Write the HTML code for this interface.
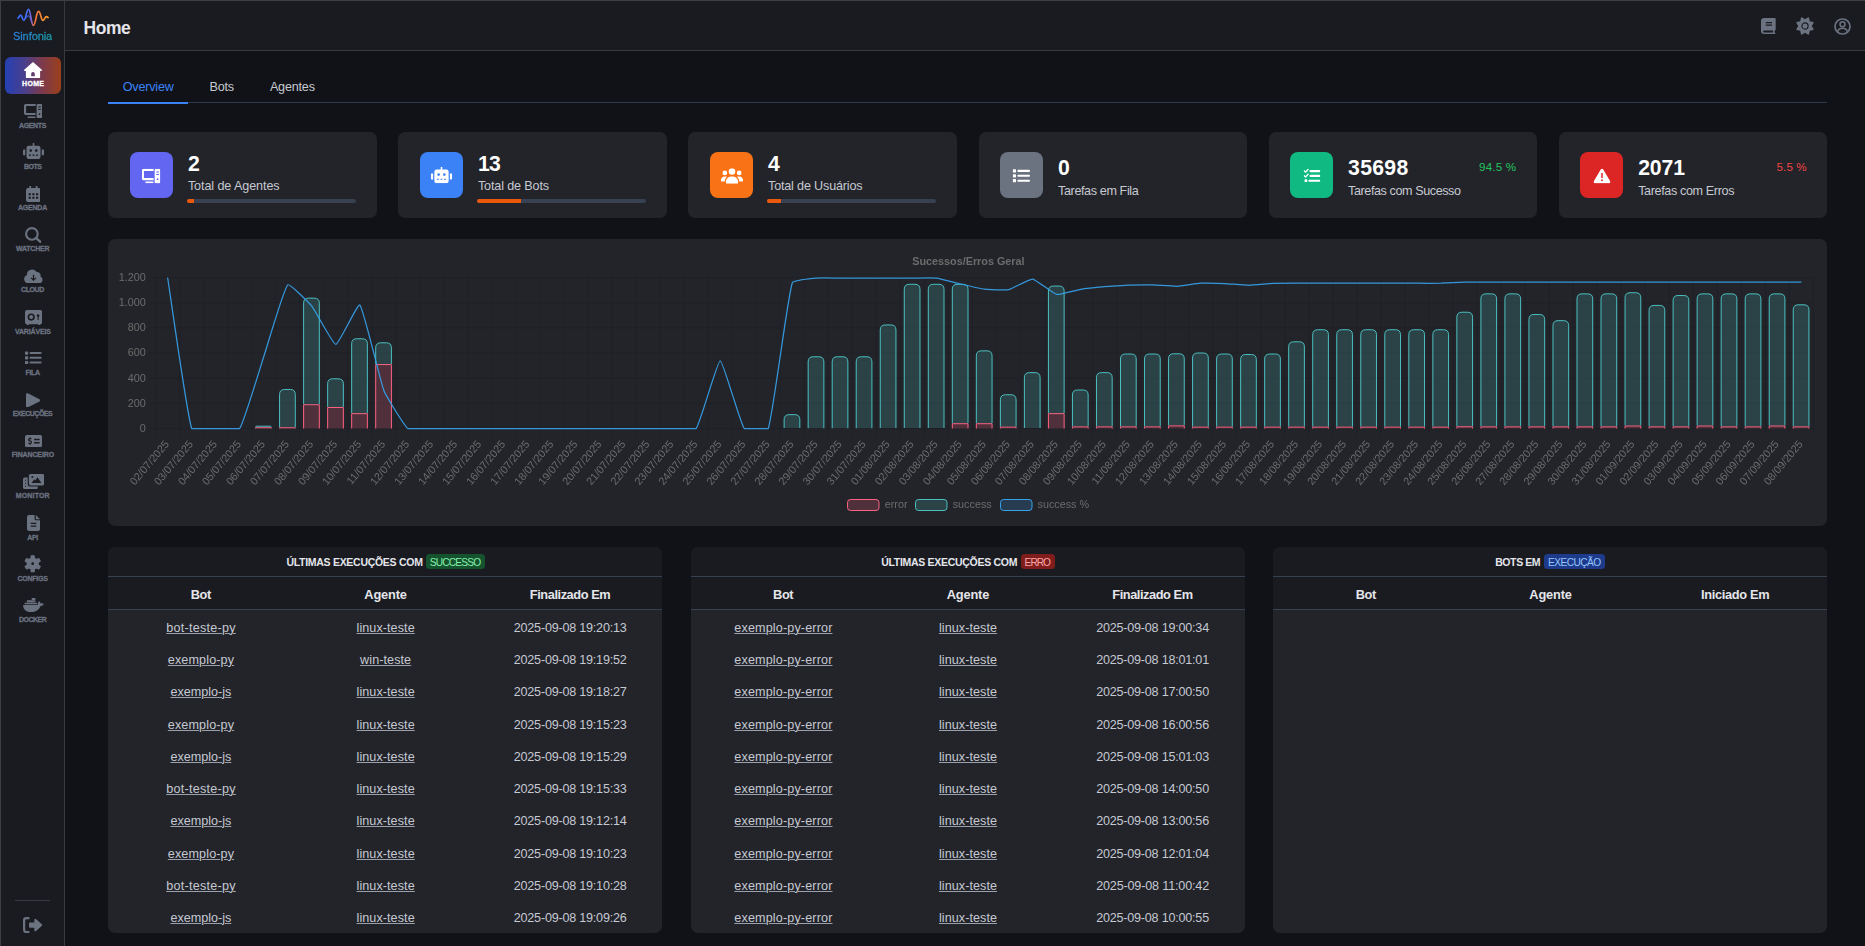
<!DOCTYPE html>
<html lang="pt-BR"><head><meta charset="utf-8"><title>Sinfonia - Home</title>
<style>
*{box-sizing:border-box;margin:0;padding:0}
html,body{width:1865px;height:946px;overflow:hidden;background:#111217;font-family:'Liberation Sans', sans-serif;}
body{position:relative}
.abs,.t,.card,.ibox,.prog,.thead,.badge,.pill{position:absolute}
.t{white-space:pre;font-weight:400;display:block;text-decoration:none}
.lnk{text-decoration:underline;text-decoration-thickness:1px;text-underline-offset:1px;text-decoration-color:#9aa1ad}
nav.side{position:absolute;left:0;top:0;width:65px;height:946px;background:#1a1b20;border-right:1px solid #38393f}
header.top{position:absolute;left:65px;top:0;width:1800px;height:51px;background:#1a1b20;border-bottom:1px solid #38393f}
nav.side *, header.top *, .card *{}
.frame-t{position:absolute;left:0;top:0;width:1865px;height:1px;background:#3d3d44}
.frame-l{position:absolute;left:0;top:0;width:1px;height:946px;background:#3d3d44}
.pill{left:5px;top:57px;width:56px;height:37px;border-radius:6px;background:linear-gradient(90deg,#2440b4 0%,#4a3f8c 35%,#7a3a4e 65%,#9c3f1c 100%)}
.card{background:#23242a;border-radius:7.2px}
.ibox{width:43px;height:46px;border-radius:8px}
.prog{width:169px;height:4px;border-radius:2px;background:#374151;overflow:hidden}
.prog i{display:block;height:4px;background:#ea580c}
.thead{background:#1a1b20;border-radius:8px 8px 0 0}
.badge{height:15px;border-radius:3.5px}
svg.chart{position:absolute;left:0;top:0;will-change:transform}
</style></head>
<body>
<nav class="side">
<svg class="abs" style="left:16px;top:6px" width="34" height="22" viewBox="16 6 34 22" fill="none">
<defs><linearGradient id="lg" x1="18" y1="0" x2="48" y2="0" gradientUnits="userSpaceOnUse"><stop offset="0" stop-color="#3a6cff"/><stop offset=".36" stop-color="#4a6cf5"/><stop offset=".46" stop-color="#8a62c4"/><stop offset=".52" stop-color="#f07040"/><stop offset="1" stop-color="#ff9a2a"/></linearGradient></defs>
<path d="M18 18.2C19 17 20 15 20.800 15.200 22 15.500 22.500 20.500 23.800 20.500 25.800 20.500 26.500 9.300 28.500 9.300 30.800 9.300 31 25.400 33.300 25.400 35.800 25.400 36.200 11.400 38.500 11.400 40.500 11.400 41.200 20.500 42.900 20.500 44.400 20.500 45 16.600 46.300 16.600 47 16.600 47.500 17.200 48.100 17.600" stroke="url(#lg)" stroke-width="1.700" stroke-linecap="round"/>
<path d="M25.500 18.500C26.500 16.500 27.300 15.800 28.300 15.800 30 15.800 30.800 20 32 22.500" stroke="url(#lg)" stroke-width="1.300" stroke-linecap="round" opacity=".75"/>
</svg>
<span class="t logo" style="left:13.00px;top:29.00px;font-size:11px;line-height:14px;color:#2385c8;letter-spacing:-0.081px;background:linear-gradient(90deg,#2a7fe0,#1a9ea8);-webkit-background-clip:text;background-clip:text;color:transparent;-webkit-text-stroke:.3px transparent;">Sinfonia</span>
<a class="pill"></a>
<svg class="abs" style="left:24.00px;top:61.80px;color:#fff" width="18" height="16.2" viewBox="0 0 18 16.2" preserveAspectRatio="none" fill="currentColor"><path fill-rule="evenodd" d="M9 0 17.800 7.700a.7.700 0 0 1-.5 1.200H16.100V15.200a1 1 0 0 1-1 1H2.900a1 1 0 0 1-1-1V8.900H.7A.7.700 0 0 1 .2 7.700ZM7.200 14.300H10.800V11.800a1.800 1.800 0 0 0-3.600 0Z"/></svg>
<span class="t" style="left:22.00px;top:79.00px;font-size:7px;line-height:9px;color:#fff;font-weight:700;letter-spacing:0.333px;-webkit-text-stroke:.3px;">HOME</span>
<svg class="abs" style="left:23.80px;top:104.00px;color:#6b7280" width="18.4" height="14.4" viewBox="0 0 18.4 14.4" preserveAspectRatio="none" fill="currentColor"><path d="M1.8 0H11.6V2.1H2.1V9H11.6V11.1H1.8A1.8 1.8 0 0 1 0 9.3V1.8A1.8 1.8 0 0 1 1.8 0ZM3.6 12.4H11.4V14.2H3.6Z"/><path fill-rule="evenodd" d="M13.9 0H17.1A1.3 1.3 0 0 1 18.4 1.3V13.1A1.3 1.3 0 0 1 17.1 14.4H13.9A1.3 1.3 0 0 1 12.6 13.1V1.3A1.3 1.3 0 0 1 13.9 0ZM14.2 2.6V3.6H16.8V2.6ZM14.2 5.1V6.1H16.8V5.1ZM15.5 9.2A.9.9 0 1 0 15.5 11 .9.9 0 0 0 15.5 9.2Z"/></svg>
<span class="t" style="left:19.00px;top:121.00px;font-size:7px;line-height:9px;color:#6b7280;font-weight:700;letter-spacing:-0.374px;-webkit-text-stroke:.3px;">AGENTS</span>
<svg class="abs" style="left:22.70px;top:143.00px;color:#6b7280" width="21" height="16" viewBox="0 0 21 16" preserveAspectRatio="none" fill="currentColor"><path fill-rule="evenodd" d="M9.7 0H11.3V2.7H15.3A2.2 2.2 0 0 1 17.5 4.9V13.8A2.2 2.2 0 0 1 15.3 16H5.7A2.2 2.2 0 0 1 3.500 13.8V4.900A2.2 2.2 0 0 1 5.7 2.7H9.7ZM7.700 6.300A1.3 1.3 0 1 0 7.700 8.900 1.3 1.3 0 0 0 7.700 6.300ZM13.3 6.300A1.3 1.3 0 1 0 13.3 8.900 1.3 1.3 0 0 0 13.3 6.300ZM6 11.6V12.7H8V11.6ZM9.500 11.6V12.7H11.5V11.6ZM13 11.6V12.7H15V11.6Z"/><path d="M.8 6.500H2.300V12.3H.8A.8.8 0 0 1 0 11.5V7.300A.8.800 0 0 1 .8 6.500ZM18.700 6.500H20.2A.8.800 0 0 1 21 7.300V11.500A.8.800 0 0 1 20.200 12.300H18.700Z"/></svg>
<span class="t" style="left:24.00px;top:162.00px;font-size:7px;line-height:9px;color:#6b7280;font-weight:700;letter-spacing:-0.484px;-webkit-text-stroke:.3px;">BOTS</span>
<svg class="abs" style="left:25.60px;top:185.60px;color:#6b7280" width="14.8" height="16" viewBox="0 0 14.8 16" preserveAspectRatio="none" fill="currentColor"><path fill-rule="evenodd" d="M3.3 0H5.100V2H9.700V0H11.500V2H12.800A2 2 0 0 1 14.800 4V14A2 2 0 0 1 12.800 16H2A2 2 0 0 1 0 14V4A2 2 0 0 1 2 2H3.300ZM2.600 7.200V9.200H4.800V7.200ZM6.300 7.200V9.200H8.500V7.200ZM10 7.200V9.200H12.200V7.200ZM2.600 10.800V12.800H4.800V10.800ZM6.300 10.800V12.800H8.500V10.800ZM10 10.800V12.800H12.200V10.800Z"/></svg>
<span class="t" style="left:18.00px;top:203.00px;font-size:7px;line-height:9px;color:#6b7280;font-weight:700;letter-spacing:-0.229px;-webkit-text-stroke:.3px;">AGENDA</span>
<svg class="abs" style="left:24.50px;top:226.90px;color:#6b7280" width="16.8" height="16.2" viewBox="0 0 16.8 16.2" preserveAspectRatio="none" fill="currentColor"><circle cx="6.900" cy="6.900" r="5.800" fill="none" stroke="currentColor" stroke-width="2.100"/><path d="M11.100 11.100 15.800 15.200" stroke="currentColor" stroke-width="2.300" stroke-linecap="round" fill="none"/></svg>
<span class="t" style="left:15.90px;top:244.00px;font-size:7px;line-height:9px;color:#6b7280;font-weight:700;letter-spacing:-0.196px;-webkit-text-stroke:.3px;">WATCHER</span>
<svg class="abs" style="left:23.50px;top:268.70px;color:#6b7280" width="19" height="14.4" viewBox="0 0 19 14.4" preserveAspectRatio="none" fill="currentColor"><path fill-rule="evenodd" d="M4.300 14.400A4.300 4.300 0 0 1 2.900 6.100 5.300 5.300 0 0 1 12.700 3.100 3.600 3.600 0 0 1 16.500 7.600 3.600 3.600 0 0 1 15.400 14.400ZM8.900 5.700V9.800L7.500 8.400 6.700 9.200 9.500 12 12.300 9.200 11.500 8.400 10.100 9.800V5.700Z"/></svg>
<span class="t" style="left:21.00px;top:285.00px;font-size:7px;line-height:9px;color:#6b7280;font-weight:700;letter-spacing:-0.423px;-webkit-text-stroke:.3px;">CLOUD</span>
<svg class="abs" style="left:24.50px;top:309.70px;color:#6b7280" width="17.2" height="15.2" viewBox="0 0 17.2 15.2" preserveAspectRatio="none" fill="currentColor"><path fill-rule="evenodd" d="M2 0H15.200A2 2 0 0 1 17.200 2V12.200A2 2 0 0 1 15.200 14.200L15.700 15.200H13.700L13.200 14.200H4L3.500 15.200H1.500L2 14.200A2 2 0 0 1 0 12.200V2A2 2 0 0 1 2 0ZM6.200 3.500A3.600 3.600 0 1 0 6.200 10.700 3.600 3.600 0 0 0 6.200 3.500ZM6.200 5.100A2 2 0 1 1 6.200 9.100 2 2 0 0 1 6.200 5.100ZM13.100 4.300A1.300 1.300 0 0 0 12.600 6.800V9.900H13.600V6.800A1.300 1.300 0 0 0 13.100 4.300Z"/></svg>
<span class="t" style="left:14.90px;top:327.00px;font-size:7px;line-height:9px;color:#6b7280;font-weight:700;letter-spacing:-0.140px;-webkit-text-stroke:.3px;">VARIÁVEIS</span>
<svg class="abs" style="left:25.00px;top:351.10px;color:#6b7280" width="16.7" height="13.6" viewBox="0 0 16.7 13.6" preserveAspectRatio="none" fill="currentColor"><path d="M.6.500H2.600A.6.600 0 0 1 3.200 1.100V3.100A.6.600 0 0 1 2.600 3.700H.6A.6.600 0 0 1 0 3.100V1.100A.6.600 0 0 1 .6.500ZM5.500 1.100H15.700A1 1 0 0 1 15.700 3.100H5.500A1 1 0 0 1 5.500 1.100ZM.6 5.200H2.600A.6.600 0 0 1 3.200 5.800V7.800A.6.600 0 0 1 2.600 8.400H.6A.6.600 0 0 1 0 7.800V5.800A.6.600 0 0 1 .6 5.200ZM5.500 5.800H15.700A1 1 0 0 1 15.700 7.800H5.500A1 1 0 0 1 5.500 5.800ZM.6 9.900H2.600A.6.600 0 0 1 3.200 10.500V12.500A.6.600 0 0 1 2.600 13.100H.6A.6.600 0 0 1 0 12.500V10.500A.6.600 0 0 1 .6 9.900ZM5.500 10.500H15.700A1 1 0 0 1 15.700 12.500H5.500A1 1 0 0 1 5.500 10.500Z"/></svg>
<span class="t" style="left:25.60px;top:368.00px;font-size:7px;line-height:9px;color:#6b7280;font-weight:700;letter-spacing:-0.388px;-webkit-text-stroke:.3px;">FILA</span>
<svg class="abs" style="left:26.30px;top:392.80px;color:#6b7280" width="14.3" height="14.6" viewBox="0 0 14.3 14.6" preserveAspectRatio="none" fill="currentColor"><path d="M1.900.3 13.500 6.200A1.200 1.200 0 0 1 13.500 8.400L1.900 14.300A1.300 1.300 0 0 1 0 13.200V1.400A1.300 1.300 0 0 1 1.900.3Z"/></svg>
<span class="t" style="left:12.70px;top:409.00px;font-size:7px;line-height:9px;color:#6b7280;font-weight:700;letter-spacing:-0.496px;-webkit-text-stroke:.3px;">EXECUÇÕES</span>
<svg class="abs" style="left:24.50px;top:434.80px;color:#6b7280" width="17" height="12.2" viewBox="0 0 17 12.2" preserveAspectRatio="none" fill="currentColor"><path fill-rule="evenodd" d="M1.800 0H15.200A1.800 1.800 0 0 1 17 1.800V10.400A1.800 1.800 0 0 1 15.200 12.200H1.800A1.800 1.800 0 0 1 0 10.400V1.800A1.800 1.800 0 0 1 1.800 0ZM9 3.800V5.200H14.600V3.800ZM9 7V8.400H14.600V7ZM4.600 2.200V3.100C3.700 3.300 3.100 3.900 3.100 4.800 3.100 6.800 5.800 6.300 5.800 7.400 5.800 7.800 5.500 8 5 8 4.500 8 4 7.800 3.500 7.500L3.100 8.500C3.500 8.800 4.100 9 4.600 9.100V10H5.500V9.100C6.400 8.900 7 8.300 7 7.300 7 5.300 4.300 5.800 4.300 4.800 4.300 4.400 4.600 4.200 5.100 4.200 5.500 4.200 5.900 4.300 6.300 4.600L6.700 3.600C6.400 3.400 6 3.200 5.500 3.100V2.200Z"/></svg>
<span class="t" style="left:11.70px;top:450.00px;font-size:7px;line-height:9px;color:#6b7280;font-weight:700;letter-spacing:-0.129px;-webkit-text-stroke:.3px;">FINANCEIRO</span>
<svg class="abs" style="left:22.70px;top:473.90px;color:#6b7280" width="21.2" height="15" viewBox="0 0 21.2 15" preserveAspectRatio="none" fill="currentColor"><path fill-rule="evenodd" d="M7.500 0H19.600A1.600 1.600 0 0 1 21.200 1.600V9.800A1.600 1.600 0 0 1 19.600 11.400H7.500A1.600 1.600 0 0 1 5.900 9.800V1.600A1.600 1.600 0 0 1 7.500 0ZM9.300 2A1 1 0 1 0 9.300 4 1 1 0 0 0 9.300 2ZM14.500 3.200 12.300 6.600 11.200 5.300 8.600 9H18.400Z"/><path fill-rule="evenodd" d="M1.600 3.600H4.700V10.200A2.400 2.400 0 0 0 7.100 12.600H14.800V13.400A1.600 1.600 0 0 1 13.200 15H1.600A1.600 1.600 0 0 1 0 13.400V5.200A1.600 1.600 0 0 1 1.600 3.600ZM2 5.700V6.800H3.100V5.700ZM2 8.700V9.800H3.100V8.700ZM2 11.700V12.800H3.100V11.700Z"/></svg>
<span class="t" style="left:15.70px;top:491.00px;font-size:7px;line-height:9px;color:#6b7280;font-weight:700;letter-spacing:0.177px;-webkit-text-stroke:.3px;">MONITOR</span>
<svg class="abs" style="left:26.50px;top:515.00px;color:#6b7280" width="13" height="16" viewBox="0 0 13 16" preserveAspectRatio="none" fill="currentColor"><path fill-rule="evenodd" d="M2 0H7.600V3.800A1.500 1.500 0 0 0 9.100 5.300H13V14A2 2 0 0 1 11 16H2A2 2 0 0 1 0 14V2A2 2 0 0 1 2 0ZM8.800 0 13 4.200H9.300A.5.500 0 0 1 8.800 3.700ZM3.700 7.800V9H9.300V7.800ZM3.700 10.500V11.700H9.300V10.500Z"/></svg>
<span class="t" style="left:27.30px;top:533.00px;font-size:7px;line-height:9px;color:#6b7280;font-weight:700;letter-spacing:-0.336px;-webkit-text-stroke:.3px;">API</span>
<svg class="abs" style="left:24.30px;top:555.20px;color:#6b7280" width="17.4" height="17.4" viewBox="0 0 17.4 17.4" preserveAspectRatio="none" fill="currentColor"><path fill-rule="evenodd" stroke="currentColor" stroke-width="1.2" stroke-linejoin="round" d="M6.97 3.37L7.28 0.83L10.12 0.83L10.43 3.37L12.45 4.54L14.81 3.54L16.23 5.99L14.18 7.54L14.18 9.86L16.23 11.41L14.81 13.86L12.45 12.86L10.43 14.03L10.12 16.57L7.28 16.57L6.97 14.03L4.95 12.86L2.59 13.86L1.17 11.41L3.22 9.86L3.22 7.54L1.17 5.99L2.59 3.54L4.95 4.54ZM6.70 8.70A2.0 2.0 0 1 0 10.70 8.70A2.0 2.0 0 1 0 6.70 8.70Z"/></svg>
<span class="t" style="left:17.40px;top:574.00px;font-size:7px;line-height:9px;color:#6b7280;font-weight:700;letter-spacing:-0.215px;-webkit-text-stroke:.3px;">CONFIGS</span>
<svg class="abs" style="left:22.50px;top:597.90px;color:#6b7280" width="21" height="14.2" viewBox="0 0 21 14.2" preserveAspectRatio="none" fill="currentColor"><path d="M8.700.1H12.400V2H8.700ZM3.900 2.200H12.400V4.300H3.900ZM1.600 4.700H14.300V6.300H1.600Z"/><path d="M.1 6.900H14.600C15.200 5.600 15.200 4.200 15.900 3 17 3.600 17.400 4.500 17.600 5.400 18.800 5 20 5.300 20.900 6 20.200 7.300 19 7.900 17.600 7.900 16 11.900 12.600 14.200 8 14.200 3 14.200 0 11.400.1 6.900Z"/></svg>
<span class="t" style="left:18.90px;top:615.00px;font-size:7px;line-height:9px;color:#6b7280;font-weight:700;letter-spacing:-0.489px;-webkit-text-stroke:.3px;">DOCKER</span>
<div class="abs" style="left:15px;top:900px;width:35px;height:1px;background:#3a3b42"></div>
<svg class="abs" style="left:23.30px;top:917.20px;width:19.3px;height:16.2px;color:#6b7280" width="17.4" height="14.6" viewBox="0 0 17.4 14.6" preserveAspectRatio="none" fill="currentColor"><path d="M3 0H5.800V2H3.200A1.200 1.200 0 0 0 2 3.200V11.400A1.200 1.200 0 0 0 3.200 12.600H5.800V14.600H3A3 3 0 0 1 0 11.600V3A3 3 0 0 1 3 0ZM11.600 1.800 17 6.600A1 1 0 0 1 17 8L11.600 12.800A.9.900 0 0 1 10.200 12.100V9.600H6.300A.9.900 0 0 1 5.400 8.700V5.900A.9.900 0 0 1 6.300 5H10.200V2.500A.9.900 0 0 1 11.600 1.800Z"/></svg>
</nav>
<header class="top">
<h1 class="t" style="left:18.60px;top:17.00px;font-size:17.5px;line-height:22px;color:#e4e5ea;font-weight:700;letter-spacing:-0.508px;">Home</h1>
<svg class="abs" style="left:1696.00px;top:18.00px;width:14.7px;height:16px;color:#6b7280" width="14" height="16" viewBox="0 0 14 16" preserveAspectRatio="none" fill="currentColor"><path fill-rule="evenodd" d="M3 0H13A1 1 0 0 1 14 1V11.500A1 1 0 0 1 13 12.500V14.500A.75.750 0 0 1 13 16H3A3 3 0 0 1 0 13V3A3 3 0 0 1 3 0ZM3 12.500A1 1 0 0 0 3 14.500H11.500V12.500ZM4.500 4V5.200H10.500V4ZM4.500 6.500V7.700H10.500V6.500Z"/></svg>
<svg class="abs" style="left:1731.00px;top:17.00px;color:#6b7280" width="18" height="18" viewBox="0 0 18 18" preserveAspectRatio="none" fill="currentColor"><path d="M9.00 2.20L12.15 0.25L12.96 0.59L13.81 4.19L17.41 5.04L17.75 5.85L15.80 9.00L17.75 12.15L17.41 12.96L13.81 13.81L12.96 17.41L12.15 17.75L9.00 15.80L5.85 17.75L5.04 17.41L4.19 13.81L0.59 12.96L0.25 12.15L2.20 9.00L0.25 5.85L0.59 5.04L4.19 4.19L5.04 0.59L5.85 0.25Z"/><circle cx="9" cy="9" r="3.100" fill="none" stroke="#1a1b20" stroke-width="1.100"/></svg>
<svg class="abs" style="left:1768.70px;top:17.60px;color:#6b7280" width="17" height="17" viewBox="0 0 17 17" preserveAspectRatio="none" fill="currentColor"><circle cx="8.500" cy="8.500" r="7.500" fill="none" stroke="currentColor" stroke-width="1.700"/><circle cx="8.500" cy="6.300" r="2.500" fill="none" stroke="currentColor" stroke-width="1.500"/><path d="M3.600 13.900A5 4.500 0 0 1 13.400 13.900" fill="none" stroke="currentColor" stroke-width="1.500"/></svg>
</header>
<div class="tabs">
<span class="t" style="left:122.70px;top:79.00px;font-size:12.6px;line-height:16px;color:#3b82f6;letter-spacing:-0.183px;">Overview</span>
<span class="t" style="left:209.60px;top:79.00px;font-size:12.6px;line-height:16px;color:#c6c9d1;letter-spacing:-0.268px;">Bots</span>
<span class="t" style="left:269.90px;top:79.00px;font-size:12.6px;line-height:16px;color:#c6c9d1;letter-spacing:-0.186px;">Agentes</span>
<div class="abs" style="left:108px;top:102px;width:1719px;height:1px;background:#2c394b"></div>
<div class="abs" style="left:108px;top:102px;width:80px;height:1.8px;background:#3b82f6"></div>
</div>
<section class="card" style="left:108.00px;top:132.00px;width:269px;height:86px">
<div class="ibox" style="left:22.00px;top:20.00px;background:#6366f1"></div>
<svg class="abs" style="left:34.30px;top:36.50px;color:#fff;transform:scale(1.02)" width="18.4" height="14.4" viewBox="0 0 18.4 14.4" preserveAspectRatio="none" fill="currentColor"><path d="M1.8 0H11.6V2.1H2.1V9H11.6V11.1H1.8A1.8 1.8 0 0 1 0 9.3V1.8A1.8 1.8 0 0 1 1.8 0ZM3.6 12.4H11.4V14.2H3.6Z"/><path fill-rule="evenodd" d="M13.9 0H17.1A1.3 1.3 0 0 1 18.4 1.3V13.1A1.3 1.3 0 0 1 17.1 14.4H13.9A1.3 1.3 0 0 1 12.6 13.1V1.3A1.3 1.3 0 0 1 13.9 0ZM14.2 2.6V3.6H16.8V2.6ZM14.2 5.1V6.1H16.8V5.1ZM15.5 9.2A.9.9 0 1 0 15.5 11 .9.9 0 0 0 15.5 9.2Z"/></svg>
<span class="t" style="left:79.90px;top:19.00px;font-size:21.2px;line-height:25px;color:#fff;font-weight:700;letter-spacing:-1.097px;">2</span>
<span class="t" style="left:79.90px;top:46.00px;font-size:12.6px;line-height:16px;color:#c6c9d1;letter-spacing:-0.095px;">Total de Agentes</span>
<div class="prog" style="left:78.90px;top:67.00px"><i style="width:6.8px"></i></div>
</section>
<section class="card" style="left:398.00px;top:132.00px;width:269px;height:86px">
<div class="ibox" style="left:22.05px;top:20.00px;background:#3b82f6"></div>
<svg class="abs" style="left:33.05px;top:34.80px;color:#fff;transform:scale(1.02)" width="21" height="16" viewBox="0 0 21 16" preserveAspectRatio="none" fill="currentColor"><path fill-rule="evenodd" d="M9.7 0H11.3V2.7H15.3A2.2 2.2 0 0 1 17.5 4.9V13.8A2.2 2.2 0 0 1 15.3 16H5.7A2.2 2.2 0 0 1 3.500 13.8V4.900A2.2 2.2 0 0 1 5.7 2.7H9.7ZM7.700 6.300A1.3 1.3 0 1 0 7.700 8.900 1.3 1.3 0 0 0 7.700 6.300ZM13.3 6.300A1.3 1.3 0 1 0 13.3 8.900 1.3 1.3 0 0 0 13.3 6.300ZM6 11.6V12.7H8V11.6ZM9.500 11.6V12.7H11.5V11.6ZM13 11.6V12.7H15V11.6Z"/><path d="M.8 6.500H2.300V12.3H.8A.8.8 0 0 1 0 11.5V7.300A.8.800 0 0 1 .8 6.500ZM18.700 6.500H20.2A.8.800 0 0 1 21 7.300V11.500A.8.800 0 0 1 20.200 12.300H18.700Z"/></svg>
<span class="t" style="left:79.95px;top:19.00px;font-size:21.2px;line-height:25px;color:#fff;font-weight:700;letter-spacing:-0.778px;">13</span>
<span class="t" style="left:79.95px;top:46.00px;font-size:12.6px;line-height:16px;color:#c6c9d1;letter-spacing:-0.143px;">Total de Bots</span>
<div class="prog" style="left:78.95px;top:67.00px"><i style="width:43.9px"></i></div>
</section>
<section class="card" style="left:688.00px;top:132.00px;width:269px;height:86px">
<div class="ibox" style="left:22.10px;top:20.00px;background:#f97316"></div>
<svg class="abs" style="left:33.60px;top:36.70px;color:#fff;transform:scale(1.12)" width="20" height="14" viewBox="0 0 20 14" preserveAspectRatio="none" fill="currentColor"><circle cx="10" cy="3" r="2.900"/><circle cx="3.600" cy="4.300" r="2.100"/><circle cx="16.400" cy="4.300" r="2.100"/><path d="M5.500 14A.8.800 0 0 1 4.700 13.200 4.600 4.600 0 0 1 9.300 7.500H10.700A4.600 4.600 0 0 1 15.300 13.200.8.800 0 0 1 14.500 14ZM.7 12A.7.700 0 0 1 0 11.300 3.600 3.600 0 0 1 3.600 7.500H4.500A3.600 3.600 0 0 1 5.400 7.600 6 6 0 0 0 3.500 12ZM16.500 12A6 6 0 0 0 14.600 7.600 3.600 3.600 0 0 1 15.500 7.500H16.400A3.600 3.600 0 0 1 20 11.300.7.700 0 0 1 19.300 12Z"/></svg>
<span class="t" style="left:80.00px;top:19.00px;font-size:21.2px;line-height:25px;color:#fff;font-weight:700;letter-spacing:0.103px;">4</span>
<span class="t" style="left:80.00px;top:46.00px;font-size:12.6px;line-height:16px;color:#c6c9d1;letter-spacing:-0.170px;">Total de Usuários</span>
<div class="prog" style="left:79.00px;top:67.00px"><i style="width:13.5px"></i></div>
</section>
<section class="card" style="left:979.00px;top:132.00px;width:268px;height:86px">
<div class="ibox" style="left:21.15px;top:20.00px;background:#6b7280"></div>
<svg class="abs" style="left:34.30px;top:36.90px;color:#fff;transform:scale(1.04)" width="16.7" height="13.6" viewBox="0 0 16.7 13.6" preserveAspectRatio="none" fill="currentColor"><path d="M.6.500H2.600A.6.600 0 0 1 3.200 1.100V3.100A.6.600 0 0 1 2.600 3.700H.6A.6.600 0 0 1 0 3.100V1.100A.6.600 0 0 1 .6.500ZM5.500 1.100H15.700A1 1 0 0 1 15.700 3.100H5.500A1 1 0 0 1 5.500 1.100ZM.6 5.200H2.600A.6.600 0 0 1 3.200 5.800V7.800A.6.600 0 0 1 2.600 8.400H.6A.6.600 0 0 1 0 7.800V5.800A.6.600 0 0 1 .6 5.200ZM5.500 5.800H15.700A1 1 0 0 1 15.700 7.800H5.500A1 1 0 0 1 5.500 5.800ZM.6 9.900H2.600A.6.600 0 0 1 3.200 10.500V12.500A.6.600 0 0 1 2.600 13.100H.6A.6.600 0 0 1 0 12.500V10.500A.6.600 0 0 1 .6 9.900ZM5.500 10.500H15.700A1 1 0 0 1 15.700 12.500H5.500A1 1 0 0 1 5.500 10.500Z"/></svg>
<span class="t" style="left:79.05px;top:23.00px;font-size:21.2px;line-height:25px;color:#fff;font-weight:700;letter-spacing:0.103px;">0</span>
<span class="t" style="left:79.05px;top:51.00px;font-size:12.6px;line-height:16px;color:#c6c9d1;letter-spacing:-0.385px;">Tarefas em Fila</span>
</section>
<section class="card" style="left:1269.00px;top:132.00px;width:268px;height:86px">
<div class="ibox" style="left:21.20px;top:20.00px;background:#10b981"></div>
<svg class="abs" style="left:34.70px;top:37.00px;color:#fff;transform:scale(1.05)" width="16" height="13.4" viewBox="0 0 16 13.4" preserveAspectRatio="none" fill="currentColor"><path d="M6.500 1.300H15A1 1 0 0 1 15 3.300H6.500A1 1 0 0 1 6.500 1.300ZM6.500 5.900H15A1 1 0 0 1 15 7.900H6.500A1 1 0 0 1 6.500 5.900ZM5.500 10.500H15A1 1 0 0 1 15 12.500H5.500A1 1 0 0 1 5.500 10.500ZM1.500 10.200H2.900A.6.600 0 0 1 3.500 10.800V12.200A.6.600 0 0 1 2.900 12.800H1.500A.6.600 0 0 1 .9 12.200V10.800A.6.600 0 0 1 1.500 10.200Z"/><path d="M.6 2.100 1.900 3.300 4.300.6M.6 6.700 1.900 7.900 4.300 5.200" fill="none" stroke="currentColor" stroke-width="1.300" stroke-linecap="round" stroke-linejoin="round"/></svg>
<span class="t" style="left:79.10px;top:23.00px;font-size:21.2px;line-height:25px;color:#fff;font-weight:700;letter-spacing:0.295px;">35698</span>
<span class="t" style="left:79.10px;top:51.00px;font-size:12.6px;line-height:16px;color:#c6c9d1;letter-spacing:-0.416px;">Tarefas com Sucesso</span>
<span class="t" style="left:210.00px;top:28.00px;font-size:11.6px;line-height:14px;color:#22c55e;letter-spacing:0.178px;">94.5 %</span>
</section>
<section class="card" style="left:1559.00px;top:132.00px;width:268px;height:86px">
<div class="ibox" style="left:21.25px;top:20.00px;background:#dc2626"></div>
<svg class="abs" style="left:34.75px;top:36.60px;color:#fff;transform:scale(1.05)" width="16" height="14.2" viewBox="0 0 16 14.2" preserveAspectRatio="none" fill="currentColor"><path fill-rule="evenodd" d="M8 0A1.400 1.400 0 0 1 9.200.7L15.800 12A1.400 1.400 0 0 1 14.600 14.200H1.400A1.400 1.400 0 0 1 .2 12L6.800.7A1.400 1.400 0 0 1 8 0ZM7.300 4.200V8.800H8.700V4.200ZM8 10.100A.9.900 0 1 0 8 11.900.9.900 0 0 0 8 10.100Z"/></svg>
<span class="t" style="left:79.15px;top:23.00px;font-size:21.2px;line-height:25px;color:#fff;font-weight:700;letter-spacing:-0.114px;">2071</span>
<span class="t" style="left:79.15px;top:51.00px;font-size:12.6px;line-height:16px;color:#c6c9d1;letter-spacing:-0.368px;">Tarefas com Erros</span>
<span class="t" style="left:217.60px;top:28.00px;font-size:11.6px;line-height:14px;color:#ef4444;letter-spacing:0.061px;">5.5 %</span>
</section>
<section class="card" style="left:108px;top:239px;width:1719px;height:286.5px">
<svg class="chart" width="1719" height="287" viewBox="108 239 1719 287" font-family="Liberation Sans, Arial, sans-serif" font-size="10.8" fill="#6c6c6c">
<text x="968.4" y="265.3" text-anchor="middle" font-weight="bold">Sucessos/Erros Geral</text>
<path d="M148.4 428.5H1813.4M148.4 403.33H1813.4M148.4 378.17H1813.4M148.4 353H1813.4M148.4 327.83H1813.4M148.4 302.67H1813.4M148.4 277.5H1813.4M155.6 277.5V435.7M179.63 277.5V435.7M203.65 277.5V435.7M227.68 277.5V435.7M251.7 277.5V435.7M275.73 277.5V435.7M299.76 277.5V435.7M323.78 277.5V435.7M347.81 277.5V435.7M371.83 277.5V435.7M395.86 277.5V435.7M419.89 277.5V435.7M443.91 277.5V435.7M467.94 277.5V435.7M491.97 277.5V435.7M515.99 277.5V435.7M540.02 277.5V435.7M564.04 277.5V435.7M588.07 277.5V435.7M612.1 277.5V435.7M636.12 277.5V435.7M660.15 277.5V435.7M684.17 277.5V435.7M708.2 277.5V435.7M732.23 277.5V435.7M756.25 277.5V435.7M780.28 277.5V435.7M804.3 277.5V435.7M828.33 277.5V435.7M852.36 277.5V435.7M876.38 277.5V435.7M900.41 277.5V435.7M924.43 277.5V435.7M948.46 277.5V435.7M972.49 277.5V435.7M996.51 277.5V435.7M1020.54 277.5V435.7M1044.57 277.5V435.7M1068.59 277.5V435.7M1092.62 277.5V435.7M1116.64 277.5V435.7M1140.67 277.5V435.7M1164.7 277.5V435.7M1188.72 277.5V435.7M1212.75 277.5V435.7M1236.77 277.5V435.7M1260.8 277.5V435.7M1284.83 277.5V435.7M1308.85 277.5V435.7M1332.88 277.5V435.7M1356.9 277.5V435.7M1380.93 277.5V435.7M1404.96 277.5V435.7M1428.98 277.5V435.7M1453.01 277.5V435.7M1477.03 277.5V435.7M1501.06 277.5V435.7M1525.09 277.5V435.7M1549.11 277.5V435.7M1573.14 277.5V435.7M1597.17 277.5V435.7M1621.19 277.5V435.7M1645.22 277.5V435.7M1669.24 277.5V435.7M1693.27 277.5V435.7M1717.3 277.5V435.7M1741.32 277.5V435.7M1765.35 277.5V435.7M1789.37 277.5V435.7M1813.4 277.5V435.7" stroke="#000" stroke-opacity=".12" stroke-width=".9" fill="none"/>
<text x="145.7" y="432.1" text-anchor="end">0</text>
<text x="145.7" y="407.1" text-anchor="end">200</text>
<text x="145.7" y="382.1" text-anchor="end">400</text>
<text x="145.7" y="356.1" text-anchor="end">600</text>
<text x="145.7" y="331.1" text-anchor="end">800</text>
<text x="145.7" y="306.1" text-anchor="end">1.000</text>
<text x="145.7" y="281.1" text-anchor="end">1.200</text>

<path d="M255.57 428.5V427.74H271.27V428.5" fill="rgba(255,99,132,.2)" stroke="rgb(255,99,132)"/>
<path d="M255.57 427.24V427.24Q255.57 426.23 256.58 426.23H270.26Q271.27 426.23 271.27 427.24V427.24" fill="rgba(75,192,192,.2)" stroke="rgb(75,192,192)"/>
<path d="M279.59 428.5V427.74H295.29V428.5" fill="rgba(255,99,132,.2)" stroke="rgb(255,99,132)"/>
<path d="M279.59 427.24V394.49Q279.59 389.49 284.59 389.49H290.29Q295.29 389.49 295.29 394.49V427.24" fill="rgba(75,192,192,.2)" stroke="rgb(75,192,192)"/>
<path d="M303.62 428.5V404.71H319.32V428.5" fill="rgba(255,99,132,.2)" stroke="rgb(255,99,132)"/>
<path d="M303.62 404.21V303.13Q303.62 298.13 308.62 298.13H314.32Q319.32 298.13 319.32 303.13V404.21" fill="rgba(75,192,192,.2)" stroke="rgb(75,192,192)"/>
<path d="M327.65 428.5V407.48H343.35V428.5" fill="rgba(255,99,132,.2)" stroke="rgb(255,99,132)"/>
<path d="M327.65 406.98V383.79Q327.65 378.79 332.65 378.79H338.35Q343.35 378.79 343.35 383.79V406.98" fill="rgba(75,192,192,.2)" stroke="rgb(75,192,192)"/>
<path d="M351.67 428.5V413.65H367.37V428.5" fill="rgba(255,99,132,.2)" stroke="rgb(255,99,132)"/>
<path d="M351.67 413.15V343.78Q351.67 338.78 356.67 338.78H362.37Q367.37 338.78 367.37 343.78V413.15" fill="rgba(75,192,192,.2)" stroke="rgb(75,192,192)"/>
<path d="M375.7 428.5V364.57H391.4V428.5" fill="rgba(255,99,132,.2)" stroke="rgb(255,99,132)"/>
<path d="M375.7 364.07V347.8Q375.7 342.8 380.7 342.8H386.4Q391.4 342.8 391.4 347.8V364.07" fill="rgba(75,192,192,.2)" stroke="rgb(75,192,192)"/>



<path d="M784.14 428V419.65Q784.14 414.65 789.14 414.65H794.84Q799.84 414.65 799.84 419.65V428" fill="rgba(75,192,192,.2)" stroke="rgb(75,192,192)"/>

<path d="M808.17 428.25V361.77Q808.17 356.77 813.17 356.77H818.87Q823.87 356.77 823.87 361.77V428.25" fill="rgba(75,192,192,.2)" stroke="rgb(75,192,192)"/>

<path d="M832.19 428.25V361.77Q832.19 356.77 837.19 356.77H842.89Q847.89 356.77 847.89 361.77V428.25" fill="rgba(75,192,192,.2)" stroke="rgb(75,192,192)"/>

<path d="M856.22 428.25V361.77Q856.22 356.77 861.22 356.77H866.92Q871.92 356.77 871.92 361.77V428.25" fill="rgba(75,192,192,.2)" stroke="rgb(75,192,192)"/>

<path d="M880.25 428.12V329.94Q880.25 324.94 885.25 324.94H890.95Q895.95 324.94 895.95 329.94V428.12" fill="rgba(75,192,192,.2)" stroke="rgb(75,192,192)"/>

<path d="M904.27 428V289.29Q904.27 284.29 909.27 284.29H914.97Q919.97 284.29 919.97 289.29V428" fill="rgba(75,192,192,.2)" stroke="rgb(75,192,192)"/>

<path d="M928.3 428V289.29Q928.3 284.29 933.3 284.29H939Q944 284.29 944 289.29V428" fill="rgba(75,192,192,.2)" stroke="rgb(75,192,192)"/>
<path d="M952.32 428.5V423.71H968.02V428.5" fill="rgba(255,99,132,.2)" stroke="rgb(255,99,132)"/>
<path d="M952.32 423.21V289.29Q952.32 284.29 957.32 284.29H963.02Q968.02 284.29 968.02 289.29V423.21" fill="rgba(75,192,192,.2)" stroke="rgb(75,192,192)"/>
<path d="M976.35 428.5V423.71H992.05V428.5" fill="rgba(255,99,132,.2)" stroke="rgb(255,99,132)"/>
<path d="M976.35 423.21V355.86Q976.35 350.86 981.35 350.86H987.05Q992.05 350.86 992.05 355.86V423.21" fill="rgba(75,192,192,.2)" stroke="rgb(75,192,192)"/>
<path d="M1000.38 428.5V427.11H1016.08V428.5" fill="rgba(255,99,132,.2)" stroke="rgb(255,99,132)"/>
<path d="M1000.38 426.61V399.77Q1000.38 394.77 1005.38 394.77H1011.08Q1016.08 394.77 1016.08 399.77V426.61" fill="rgba(75,192,192,.2)" stroke="rgb(75,192,192)"/>

<path d="M1024.4 428V377.63Q1024.4 372.63 1029.4 372.63H1035.1Q1040.1 372.63 1040.1 377.63V428" fill="rgba(75,192,192,.2)" stroke="rgb(75,192,192)"/>
<path d="M1048.43 428.5V413.65H1064.13V428.5" fill="rgba(255,99,132,.2)" stroke="rgb(255,99,132)"/>
<path d="M1048.43 413.15V291.05Q1048.43 286.05 1053.43 286.05H1059.13Q1064.13 286.05 1064.13 291.05V413.15" fill="rgba(75,192,192,.2)" stroke="rgb(75,192,192)"/>
<path d="M1072.45 428.5V426.86H1088.15V428.5" fill="rgba(255,99,132,.2)" stroke="rgb(255,99,132)"/>
<path d="M1072.45 426.36V394.99Q1072.45 389.99 1077.45 389.99H1083.15Q1088.15 389.99 1088.15 394.99V426.36" fill="rgba(75,192,192,.2)" stroke="rgb(75,192,192)"/>
<path d="M1096.48 428.5V426.86H1112.18V428.5" fill="rgba(255,99,132,.2)" stroke="rgb(255,99,132)"/>
<path d="M1096.48 426.36V377.63Q1096.48 372.63 1101.48 372.63H1107.18Q1112.18 372.63 1112.18 377.63V426.36" fill="rgba(75,192,192,.2)" stroke="rgb(75,192,192)"/>
<path d="M1120.51 428.5V426.86H1136.21V428.5" fill="rgba(255,99,132,.2)" stroke="rgb(255,99,132)"/>
<path d="M1120.51 426.36V359Q1120.51 354 1125.51 354H1131.21Q1136.21 354 1136.21 359V426.36" fill="rgba(75,192,192,.2)" stroke="rgb(75,192,192)"/>
<path d="M1144.53 428.5V426.86H1160.23V428.5" fill="rgba(255,99,132,.2)" stroke="rgb(255,99,132)"/>
<path d="M1144.53 426.36V359Q1144.53 354 1149.53 354H1155.23Q1160.23 354 1160.23 359V426.36" fill="rgba(75,192,192,.2)" stroke="rgb(75,192,192)"/>
<path d="M1168.56 428.5V425.85H1184.26V428.5" fill="rgba(255,99,132,.2)" stroke="rgb(255,99,132)"/>
<path d="M1168.56 425.35V358.75Q1168.56 353.75 1173.56 353.75H1179.26Q1184.26 353.75 1184.26 358.75V425.35" fill="rgba(75,192,192,.2)" stroke="rgb(75,192,192)"/>
<path d="M1192.59 428.5V427.11H1208.29V428.5" fill="rgba(255,99,132,.2)" stroke="rgb(255,99,132)"/>
<path d="M1192.59 426.61V358Q1192.59 353 1197.59 353H1203.29Q1208.29 353 1208.29 358V426.61" fill="rgba(75,192,192,.2)" stroke="rgb(75,192,192)"/>
<path d="M1216.61 428.5V427.11H1232.31V428.5" fill="rgba(255,99,132,.2)" stroke="rgb(255,99,132)"/>
<path d="M1216.61 426.61V359Q1216.61 354 1221.61 354H1227.31Q1232.31 354 1232.31 359V426.61" fill="rgba(75,192,192,.2)" stroke="rgb(75,192,192)"/>
<path d="M1240.64 428.5V427.11H1256.34V428.5" fill="rgba(255,99,132,.2)" stroke="rgb(255,99,132)"/>
<path d="M1240.64 426.61V359.51Q1240.64 354.51 1245.64 354.51H1251.34Q1256.34 354.51 1256.34 359.51V426.61" fill="rgba(75,192,192,.2)" stroke="rgb(75,192,192)"/>
<path d="M1264.66 428.5V427.11H1280.36V428.5" fill="rgba(255,99,132,.2)" stroke="rgb(255,99,132)"/>
<path d="M1264.66 426.61V359Q1264.66 354 1269.66 354H1275.36Q1280.36 354 1280.36 359V426.61" fill="rgba(75,192,192,.2)" stroke="rgb(75,192,192)"/>
<path d="M1288.69 428.5V427.11H1304.39V428.5" fill="rgba(255,99,132,.2)" stroke="rgb(255,99,132)"/>
<path d="M1288.69 426.61V346.8Q1288.69 341.8 1293.69 341.8H1299.39Q1304.39 341.8 1304.39 346.8V426.61" fill="rgba(75,192,192,.2)" stroke="rgb(75,192,192)"/>
<path d="M1312.72 428.5V427.11H1328.42V428.5" fill="rgba(255,99,132,.2)" stroke="rgb(255,99,132)"/>
<path d="M1312.72 426.61V334.72Q1312.72 329.72 1317.72 329.72H1323.42Q1328.42 329.72 1328.42 334.72V426.61" fill="rgba(75,192,192,.2)" stroke="rgb(75,192,192)"/>
<path d="M1336.74 428.5V427.11H1352.44V428.5" fill="rgba(255,99,132,.2)" stroke="rgb(255,99,132)"/>
<path d="M1336.74 426.61V334.72Q1336.74 329.72 1341.74 329.72H1347.44Q1352.44 329.72 1352.44 334.72V426.61" fill="rgba(75,192,192,.2)" stroke="rgb(75,192,192)"/>
<path d="M1360.77 428.5V427.11H1376.47V428.5" fill="rgba(255,99,132,.2)" stroke="rgb(255,99,132)"/>
<path d="M1360.77 426.61V334.72Q1360.77 329.72 1365.77 329.72H1371.47Q1376.47 329.72 1376.47 334.72V426.61" fill="rgba(75,192,192,.2)" stroke="rgb(75,192,192)"/>
<path d="M1384.79 428.5V427.11H1400.49V428.5" fill="rgba(255,99,132,.2)" stroke="rgb(255,99,132)"/>
<path d="M1384.79 426.61V334.72Q1384.79 329.72 1389.79 329.72H1395.49Q1400.49 329.72 1400.49 334.72V426.61" fill="rgba(75,192,192,.2)" stroke="rgb(75,192,192)"/>
<path d="M1408.82 428.5V427.11H1424.52V428.5" fill="rgba(255,99,132,.2)" stroke="rgb(255,99,132)"/>
<path d="M1408.82 426.61V334.72Q1408.82 329.72 1413.82 329.72H1419.52Q1424.52 329.72 1424.52 334.72V426.61" fill="rgba(75,192,192,.2)" stroke="rgb(75,192,192)"/>
<path d="M1432.85 428.5V427.11H1448.55V428.5" fill="rgba(255,99,132,.2)" stroke="rgb(255,99,132)"/>
<path d="M1432.85 426.61V334.72Q1432.85 329.72 1437.85 329.72H1443.55Q1448.55 329.72 1448.55 334.72V426.61" fill="rgba(75,192,192,.2)" stroke="rgb(75,192,192)"/>
<path d="M1456.87 428.5V426.74H1472.57V428.5" fill="rgba(255,99,132,.2)" stroke="rgb(255,99,132)"/>
<path d="M1456.87 426.24V317.23Q1456.87 312.23 1461.87 312.23H1467.57Q1472.57 312.23 1472.57 317.23V426.24" fill="rgba(75,192,192,.2)" stroke="rgb(75,192,192)"/>
<path d="M1480.9 428.5V426.86H1496.6V428.5" fill="rgba(255,99,132,.2)" stroke="rgb(255,99,132)"/>
<path d="M1480.9 426.36V298.86Q1480.9 293.86 1485.9 293.86H1491.6Q1496.6 293.86 1496.6 298.86V426.36" fill="rgba(75,192,192,.2)" stroke="rgb(75,192,192)"/>
<path d="M1504.92 428.5V426.86H1520.62V428.5" fill="rgba(255,99,132,.2)" stroke="rgb(255,99,132)"/>
<path d="M1504.92 426.36V298.86Q1504.92 293.86 1509.92 293.86H1515.62Q1520.62 293.86 1520.62 298.86V426.36" fill="rgba(75,192,192,.2)" stroke="rgb(75,192,192)"/>
<path d="M1528.95 428.5V426.86H1544.65V428.5" fill="rgba(255,99,132,.2)" stroke="rgb(255,99,132)"/>
<path d="M1528.95 426.36V319.49Q1528.95 314.49 1533.95 314.49H1539.65Q1544.65 314.49 1544.65 319.49V426.36" fill="rgba(75,192,192,.2)" stroke="rgb(75,192,192)"/>
<path d="M1552.98 428.5V426.86H1568.68V428.5" fill="rgba(255,99,132,.2)" stroke="rgb(255,99,132)"/>
<path d="M1552.98 426.36V325.66Q1552.98 320.66 1557.98 320.66H1563.68Q1568.68 320.66 1568.68 325.66V426.36" fill="rgba(75,192,192,.2)" stroke="rgb(75,192,192)"/>
<path d="M1577 428.5V426.86H1592.7V428.5" fill="rgba(255,99,132,.2)" stroke="rgb(255,99,132)"/>
<path d="M1577 426.36V298.86Q1577 293.86 1582 293.86H1587.7Q1592.7 293.86 1592.7 298.86V426.36" fill="rgba(75,192,192,.2)" stroke="rgb(75,192,192)"/>
<path d="M1601.03 428.5V426.86H1616.73V428.5" fill="rgba(255,99,132,.2)" stroke="rgb(255,99,132)"/>
<path d="M1601.03 426.36V298.86Q1601.03 293.86 1606.03 293.86H1611.73Q1616.73 293.86 1616.73 298.86V426.36" fill="rgba(75,192,192,.2)" stroke="rgb(75,192,192)"/>
<path d="M1625.05 428.5V425.98H1640.75V428.5" fill="rgba(255,99,132,.2)" stroke="rgb(255,99,132)"/>
<path d="M1625.05 425.48V297.72Q1625.05 292.72 1630.05 292.72H1635.75Q1640.75 292.72 1640.75 297.72V425.48" fill="rgba(75,192,192,.2)" stroke="rgb(75,192,192)"/>
<path d="M1649.08 428.5V426.86H1664.78V428.5" fill="rgba(255,99,132,.2)" stroke="rgb(255,99,132)"/>
<path d="M1649.08 426.36V310.43Q1649.08 305.43 1654.08 305.43H1659.78Q1664.78 305.43 1664.78 310.43V426.36" fill="rgba(75,192,192,.2)" stroke="rgb(75,192,192)"/>
<path d="M1673.11 428.5V426.86H1688.81V428.5" fill="rgba(255,99,132,.2)" stroke="rgb(255,99,132)"/>
<path d="M1673.11 426.36V300.49Q1673.11 295.49 1678.11 295.49H1683.81Q1688.81 295.49 1688.81 300.49V426.36" fill="rgba(75,192,192,.2)" stroke="rgb(75,192,192)"/>
<path d="M1697.13 428.5V425.98H1712.83V428.5" fill="rgba(255,99,132,.2)" stroke="rgb(255,99,132)"/>
<path d="M1697.13 425.48V298.86Q1697.13 293.86 1702.13 293.86H1707.83Q1712.83 293.86 1712.83 298.86V425.48" fill="rgba(75,192,192,.2)" stroke="rgb(75,192,192)"/>
<path d="M1721.16 428.5V426.86H1736.86V428.5" fill="rgba(255,99,132,.2)" stroke="rgb(255,99,132)"/>
<path d="M1721.16 426.36V298.86Q1721.16 293.86 1726.16 293.86H1731.86Q1736.86 293.86 1736.86 298.86V426.36" fill="rgba(75,192,192,.2)" stroke="rgb(75,192,192)"/>
<path d="M1745.19 428.5V426.86H1760.89V428.5" fill="rgba(255,99,132,.2)" stroke="rgb(255,99,132)"/>
<path d="M1745.19 426.36V298.86Q1745.19 293.86 1750.19 293.86H1755.89Q1760.89 293.86 1760.89 298.86V426.36" fill="rgba(75,192,192,.2)" stroke="rgb(75,192,192)"/>
<path d="M1769.21 428.5V425.98H1784.91V428.5" fill="rgba(255,99,132,.2)" stroke="rgb(255,99,132)"/>
<path d="M1769.21 425.48V298.86Q1769.21 293.86 1774.21 293.86H1779.91Q1784.91 293.86 1784.91 298.86V425.48" fill="rgba(75,192,192,.2)" stroke="rgb(75,192,192)"/>
<path d="M1793.24 428.5V426.86H1808.94V428.5" fill="rgba(255,99,132,.2)" stroke="rgb(255,99,132)"/>
<path d="M1793.24 426.36V309.8Q1793.24 304.8 1798.24 304.8H1803.94Q1808.94 304.8 1808.94 309.8V426.36" fill="rgba(75,192,192,.2)" stroke="rgb(75,192,192)"/>
<path d="M167.61 277.5C170.5 295.62 186.66 412.84 191.64 428.5C192.42 428.5 212.78 428.5 215.67 428.5C218.55 428.5 238.3 428.5 239.69 428.5C244.07 421.97 260.84 365.38 263.72 356.77C266.6 348.15 283.69 289.18 287.74 284.9C289.46 283.09 309.38 303.08 311.77 306.04C315.15 310.22 332.94 344.46 335.8 344.39C338.71 344.33 357.85 303.09 359.82 304.98C363.62 308.62 380.02 380.61 383.85 390.45C385.79 395.43 404.11 425.52 407.87 428.5C409.88 428.5 429.02 428.5 431.9 428.5C434.78 428.5 453.04 428.5 455.93 428.5C458.81 428.5 477.07 428.5 479.95 428.5C482.84 428.5 501.1 428.5 503.98 428.5C506.86 428.5 525.12 428.5 528 428.5C530.89 428.5 549.15 428.5 552.03 428.5C554.91 428.5 573.17 428.5 576.06 428.5C578.94 428.5 597.2 428.5 600.08 428.5C602.97 428.5 621.23 428.5 624.11 428.5C626.99 428.5 645.25 428.5 648.13 428.5C651.02 428.5 669.28 428.5 672.16 428.5C675.04 428.5 694.74 428.5 696.19 428.5C700.51 422.42 717.33 360.85 720.21 360.85C723.1 360.85 739.92 422.42 744.24 428.5C745.69 428.5 767.46 428.5 768.27 428.5C773.22 413.46 787.34 298.27 792.29 282.78C793.11 280.22 813.41 278.39 816.32 278.1C819.17 277.83 837.46 278.1 840.34 278.1C843.23 278.1 861.49 278.1 864.37 278.1C867.25 278.1 885.51 278.1 888.4 278.1C891.28 278.1 909.54 278.1 912.42 278.1C915.3 278.1 933.61 277.76 936.45 278.1C939.37 278.46 957.58 283.33 960.47 283.99C963.35 284.65 981.59 288.78 984.5 289.13C987.35 289.47 1005.77 290.31 1008.53 289.73C1011.54 289.1 1029.79 278.74 1032.55 279.01C1035.55 279.3 1053.48 293.75 1056.58 294.41C1059.25 294.98 1077.7 289.74 1080.6 289.28C1083.46 288.82 1101.74 286.96 1104.63 286.71C1107.51 286.47 1125.77 285.31 1128.66 285.2C1131.54 285.09 1149.8 284.84 1152.68 284.9C1155.57 284.96 1173.83 286.36 1176.71 286.26C1179.6 286.16 1197.84 283.4 1200.73 283.24C1203.61 283.08 1221.88 283.41 1224.76 283.54C1227.65 283.67 1245.9 285.36 1248.79 285.35C1251.67 285.34 1269.93 283.52 1272.81 283.39C1275.69 283.26 1293.96 283.25 1296.84 283.24C1299.72 283.23 1317.98 283.24 1320.87 283.24C1323.75 283.24 1342.01 283.24 1344.89 283.24C1347.77 283.24 1366.03 283.24 1368.92 283.24C1371.8 283.24 1390.06 283.24 1392.94 283.24C1395.83 283.24 1414.09 283.24 1416.97 283.24C1419.85 283.24 1438.11 283.3 1441 283.24C1443.88 283.17 1462.14 282.24 1465.02 282.18C1467.9 282.12 1486.16 282.18 1489.05 282.18C1491.93 282.18 1510.19 282.18 1513.07 282.18C1515.96 282.18 1534.22 282.18 1537.1 282.18C1539.98 282.18 1558.24 282.18 1561.13 282.18C1564.01 282.18 1582.27 282.18 1585.15 282.18C1588.04 282.18 1606.3 282.18 1609.18 282.18C1612.06 282.18 1630.32 282.18 1633.2 282.18C1636.09 282.18 1654.35 282.18 1657.23 282.18C1660.11 282.18 1678.37 282.18 1681.26 282.18C1684.14 282.18 1702.4 282.18 1705.28 282.18C1708.17 282.18 1726.43 282.18 1729.31 282.18C1732.19 282.18 1750.45 282.18 1753.33 282.18C1756.22 282.18 1774.48 282.18 1777.36 282.18C1780.24 282.18 1798.5 282.18 1801.39 282.18" fill="none" stroke="rgb(54,162,235)" stroke-width="1.25" stroke-opacity=".92" stroke-linejoin="round"/>
<text transform="translate(166.61 441.9) rotate(-50)" text-anchor="end" y="3.9">02/07/2025</text>
<text transform="translate(190.64 441.9) rotate(-50)" text-anchor="end" y="3.9">03/07/2025</text>
<text transform="translate(214.67 441.9) rotate(-50)" text-anchor="end" y="3.9">04/07/2025</text>
<text transform="translate(238.69 441.9) rotate(-50)" text-anchor="end" y="3.9">05/07/2025</text>
<text transform="translate(262.72 441.9) rotate(-50)" text-anchor="end" y="3.9">06/07/2025</text>
<text transform="translate(286.74 441.9) rotate(-50)" text-anchor="end" y="3.9">07/07/2025</text>
<text transform="translate(310.77 441.9) rotate(-50)" text-anchor="end" y="3.9">08/07/2025</text>
<text transform="translate(334.8 441.9) rotate(-50)" text-anchor="end" y="3.9">09/07/2025</text>
<text transform="translate(358.82 441.9) rotate(-50)" text-anchor="end" y="3.9">10/07/2025</text>
<text transform="translate(382.85 441.9) rotate(-50)" text-anchor="end" y="3.9">11/07/2025</text>
<text transform="translate(406.87 441.9) rotate(-50)" text-anchor="end" y="3.9">12/07/2025</text>
<text transform="translate(430.9 441.9) rotate(-50)" text-anchor="end" y="3.9">13/07/2025</text>
<text transform="translate(454.93 441.9) rotate(-50)" text-anchor="end" y="3.9">14/07/2025</text>
<text transform="translate(478.95 441.9) rotate(-50)" text-anchor="end" y="3.9">15/07/2025</text>
<text transform="translate(502.98 441.9) rotate(-50)" text-anchor="end" y="3.9">16/07/2025</text>
<text transform="translate(527 441.9) rotate(-50)" text-anchor="end" y="3.9">17/07/2025</text>
<text transform="translate(551.03 441.9) rotate(-50)" text-anchor="end" y="3.9">18/07/2025</text>
<text transform="translate(575.06 441.9) rotate(-50)" text-anchor="end" y="3.9">19/07/2025</text>
<text transform="translate(599.08 441.9) rotate(-50)" text-anchor="end" y="3.9">20/07/2025</text>
<text transform="translate(623.11 441.9) rotate(-50)" text-anchor="end" y="3.9">21/07/2025</text>
<text transform="translate(647.13 441.9) rotate(-50)" text-anchor="end" y="3.9">22/07/2025</text>
<text transform="translate(671.16 441.9) rotate(-50)" text-anchor="end" y="3.9">23/07/2025</text>
<text transform="translate(695.19 441.9) rotate(-50)" text-anchor="end" y="3.9">24/07/2025</text>
<text transform="translate(719.21 441.9) rotate(-50)" text-anchor="end" y="3.9">25/07/2025</text>
<text transform="translate(743.24 441.9) rotate(-50)" text-anchor="end" y="3.9">26/07/2025</text>
<text transform="translate(767.27 441.9) rotate(-50)" text-anchor="end" y="3.9">27/07/2025</text>
<text transform="translate(791.29 441.9) rotate(-50)" text-anchor="end" y="3.9">28/07/2025</text>
<text transform="translate(815.32 441.9) rotate(-50)" text-anchor="end" y="3.9">29/07/2025</text>
<text transform="translate(839.34 441.9) rotate(-50)" text-anchor="end" y="3.9">30/07/2025</text>
<text transform="translate(863.37 441.9) rotate(-50)" text-anchor="end" y="3.9">31/07/2025</text>
<text transform="translate(887.4 441.9) rotate(-50)" text-anchor="end" y="3.9">01/08/2025</text>
<text transform="translate(911.42 441.9) rotate(-50)" text-anchor="end" y="3.9">02/08/2025</text>
<text transform="translate(935.45 441.9) rotate(-50)" text-anchor="end" y="3.9">03/08/2025</text>
<text transform="translate(959.47 441.9) rotate(-50)" text-anchor="end" y="3.9">04/08/2025</text>
<text transform="translate(983.5 441.9) rotate(-50)" text-anchor="end" y="3.9">05/08/2025</text>
<text transform="translate(1007.53 441.9) rotate(-50)" text-anchor="end" y="3.9">06/08/2025</text>
<text transform="translate(1031.55 441.9) rotate(-50)" text-anchor="end" y="3.9">07/08/2025</text>
<text transform="translate(1055.58 441.9) rotate(-50)" text-anchor="end" y="3.9">08/08/2025</text>
<text transform="translate(1079.6 441.9) rotate(-50)" text-anchor="end" y="3.9">09/08/2025</text>
<text transform="translate(1103.63 441.9) rotate(-50)" text-anchor="end" y="3.9">10/08/2025</text>
<text transform="translate(1127.66 441.9) rotate(-50)" text-anchor="end" y="3.9">11/08/2025</text>
<text transform="translate(1151.68 441.9) rotate(-50)" text-anchor="end" y="3.9">12/08/2025</text>
<text transform="translate(1175.71 441.9) rotate(-50)" text-anchor="end" y="3.9">13/08/2025</text>
<text transform="translate(1199.73 441.9) rotate(-50)" text-anchor="end" y="3.9">14/08/2025</text>
<text transform="translate(1223.76 441.9) rotate(-50)" text-anchor="end" y="3.9">15/08/2025</text>
<text transform="translate(1247.79 441.9) rotate(-50)" text-anchor="end" y="3.9">16/08/2025</text>
<text transform="translate(1271.81 441.9) rotate(-50)" text-anchor="end" y="3.9">17/08/2025</text>
<text transform="translate(1295.84 441.9) rotate(-50)" text-anchor="end" y="3.9">18/08/2025</text>
<text transform="translate(1319.87 441.9) rotate(-50)" text-anchor="end" y="3.9">19/08/2025</text>
<text transform="translate(1343.89 441.9) rotate(-50)" text-anchor="end" y="3.9">20/08/2025</text>
<text transform="translate(1367.92 441.9) rotate(-50)" text-anchor="end" y="3.9">21/08/2025</text>
<text transform="translate(1391.94 441.9) rotate(-50)" text-anchor="end" y="3.9">22/08/2025</text>
<text transform="translate(1415.97 441.9) rotate(-50)" text-anchor="end" y="3.9">23/08/2025</text>
<text transform="translate(1440 441.9) rotate(-50)" text-anchor="end" y="3.9">24/08/2025</text>
<text transform="translate(1464.02 441.9) rotate(-50)" text-anchor="end" y="3.9">25/08/2025</text>
<text transform="translate(1488.05 441.9) rotate(-50)" text-anchor="end" y="3.9">26/08/2025</text>
<text transform="translate(1512.07 441.9) rotate(-50)" text-anchor="end" y="3.9">27/08/2025</text>
<text transform="translate(1536.1 441.9) rotate(-50)" text-anchor="end" y="3.9">28/08/2025</text>
<text transform="translate(1560.13 441.9) rotate(-50)" text-anchor="end" y="3.9">29/08/2025</text>
<text transform="translate(1584.15 441.9) rotate(-50)" text-anchor="end" y="3.9">30/08/2025</text>
<text transform="translate(1608.18 441.9) rotate(-50)" text-anchor="end" y="3.9">31/08/2025</text>
<text transform="translate(1632.2 441.9) rotate(-50)" text-anchor="end" y="3.9">01/09/2025</text>
<text transform="translate(1656.23 441.9) rotate(-50)" text-anchor="end" y="3.9">02/09/2025</text>
<text transform="translate(1680.26 441.9) rotate(-50)" text-anchor="end" y="3.9">03/09/2025</text>
<text transform="translate(1704.28 441.9) rotate(-50)" text-anchor="end" y="3.9">04/09/2025</text>
<text transform="translate(1728.31 441.9) rotate(-50)" text-anchor="end" y="3.9">05/09/2025</text>
<text transform="translate(1752.33 441.9) rotate(-50)" text-anchor="end" y="3.9">06/09/2025</text>
<text transform="translate(1776.36 441.9) rotate(-50)" text-anchor="end" y="3.9">07/09/2025</text>
<text transform="translate(1800.39 441.9) rotate(-50)" text-anchor="end" y="3.9">08/09/2025</text>
<rect x="847.5" y="499.5" width="31.500" height="11" rx="3" fill="rgba(255,99,132,.2)" stroke="rgb(255,99,132)"/>
<text x="884.7" y="507.8">error</text>
<rect x="915.5" y="499.5" width="31.500" height="11" rx="3" fill="rgba(75,192,192,.2)" stroke="rgb(75,192,192)"/>
<text x="952.7" y="507.8">success</text>
<rect x="1000.5" y="499.5" width="31.500" height="11" rx="3" fill="rgba(54,162,235,.2)" stroke="rgb(54,162,235)"/>
<text x="1037.5" y="507.8">success %</text>
</svg>
</section>
<section class="card tbl" style="left:108.00px;top:547.00px;width:554px;height:386px">
<div class="thead" style="left:0.00px;top:0.00px;width:554px;height:62px"></div>
<div class="abs" style="left:0.00px;top:29.00px;width:554px;height:1px;background:#374151"></div>
<div class="abs" style="left:0.00px;top:62.00px;width:554px;height:1px;background:#374151"></div>
<span class="t" style="left:178.40px;top:8.00px;font-size:10.5px;line-height:14px;color:#e4e6eb;font-weight:700;letter-spacing:-0.283px;">ÚLTIMAS EXECUÇÕES COM</span>
<div class="badge" style="left:318.00px;top:7.00px;width:59.0px;background:#14532d"></div>
<span class="t" style="left:321.70px;top:9.00px;font-size:10.2px;line-height:13px;color:#86efac;letter-spacing:-0.827px;">SUCCESSO</span>
<span class="t" style="left:82.68px;top:39.00px;font-size:12.8px;line-height:17px;color:#e4e6eb;font-weight:700;letter-spacing:-0.414px;">Bot</span>
<span class="t" style="left:256.30px;top:39.00px;font-size:12.8px;line-height:17px;color:#e4e6eb;font-weight:700;letter-spacing:-0.155px;">Agente</span>
<span class="t" style="left:421.87px;top:39.00px;font-size:12.8px;line-height:17px;color:#e4e6eb;font-weight:700;letter-spacing:-0.437px;">Finalizado Em</span>
<a class="t lnk" style="left:58.23px;top:73.00px;font-size:12.6px;line-height:16px;color:#c5c9d2;letter-spacing:0.264px;">bot-teste-py</a>
<a class="t lnk" style="left:248.55px;top:73.00px;font-size:12.6px;line-height:16px;color:#c5c9d2;letter-spacing:0.069px;">linux-teste</a>
<span class="t" style="left:405.77px;top:73.00px;font-size:12.6px;line-height:16px;color:#c5c9d2;letter-spacing:-0.220px;">2025-09-08 19:20:13</span>
<a class="t lnk" style="left:59.83px;top:105.00px;font-size:12.6px;line-height:16px;color:#c5c9d2;letter-spacing:0.121px;">exemplo-py</a>
<a class="t lnk" style="left:252.10px;top:105.00px;font-size:12.6px;line-height:16px;color:#c5c9d2;letter-spacing:0.074px;">win-teste</a>
<span class="t" style="left:405.77px;top:105.00px;font-size:12.6px;line-height:16px;color:#c5c9d2;letter-spacing:-0.220px;">2025-09-08 19:19:52</span>
<a class="t lnk" style="left:62.48px;top:137.00px;font-size:12.6px;line-height:16px;color:#c5c9d2;">exemplo-js</a>
<a class="t lnk" style="left:248.55px;top:137.00px;font-size:12.6px;line-height:16px;color:#c5c9d2;letter-spacing:0.069px;">linux-teste</a>
<span class="t" style="left:405.77px;top:137.00px;font-size:12.6px;line-height:16px;color:#c5c9d2;letter-spacing:-0.220px;">2025-09-08 19:18:27</span>
<a class="t lnk" style="left:59.83px;top:170.00px;font-size:12.6px;line-height:16px;color:#c5c9d2;letter-spacing:0.121px;">exemplo-py</a>
<a class="t lnk" style="left:248.55px;top:170.00px;font-size:12.6px;line-height:16px;color:#c5c9d2;letter-spacing:0.069px;">linux-teste</a>
<span class="t" style="left:405.77px;top:170.00px;font-size:12.6px;line-height:16px;color:#c5c9d2;letter-spacing:-0.220px;">2025-09-08 19:15:23</span>
<a class="t lnk" style="left:62.48px;top:202.00px;font-size:12.6px;line-height:16px;color:#c5c9d2;">exemplo-js</a>
<a class="t lnk" style="left:248.55px;top:202.00px;font-size:12.6px;line-height:16px;color:#c5c9d2;letter-spacing:0.069px;">linux-teste</a>
<span class="t" style="left:405.77px;top:202.00px;font-size:12.6px;line-height:16px;color:#c5c9d2;letter-spacing:-0.220px;">2025-09-08 19:15:29</span>
<a class="t lnk" style="left:58.23px;top:234.00px;font-size:12.6px;line-height:16px;color:#c5c9d2;letter-spacing:0.264px;">bot-teste-py</a>
<a class="t lnk" style="left:248.55px;top:234.00px;font-size:12.6px;line-height:16px;color:#c5c9d2;letter-spacing:0.069px;">linux-teste</a>
<span class="t" style="left:405.77px;top:234.00px;font-size:12.6px;line-height:16px;color:#c5c9d2;letter-spacing:-0.220px;">2025-09-08 19:15:33</span>
<a class="t lnk" style="left:62.48px;top:266.00px;font-size:12.6px;line-height:16px;color:#c5c9d2;">exemplo-js</a>
<a class="t lnk" style="left:248.55px;top:266.00px;font-size:12.6px;line-height:16px;color:#c5c9d2;letter-spacing:0.069px;">linux-teste</a>
<span class="t" style="left:405.77px;top:266.00px;font-size:12.6px;line-height:16px;color:#c5c9d2;letter-spacing:-0.220px;">2025-09-08 19:12:14</span>
<a class="t lnk" style="left:59.83px;top:299.00px;font-size:12.6px;line-height:16px;color:#c5c9d2;letter-spacing:0.121px;">exemplo-py</a>
<a class="t lnk" style="left:248.55px;top:299.00px;font-size:12.6px;line-height:16px;color:#c5c9d2;letter-spacing:0.069px;">linux-teste</a>
<span class="t" style="left:405.77px;top:299.00px;font-size:12.6px;line-height:16px;color:#c5c9d2;letter-spacing:-0.220px;">2025-09-08 19:10:23</span>
<a class="t lnk" style="left:58.23px;top:331.00px;font-size:12.6px;line-height:16px;color:#c5c9d2;letter-spacing:0.264px;">bot-teste-py</a>
<a class="t lnk" style="left:248.55px;top:331.00px;font-size:12.6px;line-height:16px;color:#c5c9d2;letter-spacing:0.069px;">linux-teste</a>
<span class="t" style="left:405.77px;top:331.00px;font-size:12.6px;line-height:16px;color:#c5c9d2;letter-spacing:-0.220px;">2025-09-08 19:10:28</span>
<a class="t lnk" style="left:62.48px;top:363.00px;font-size:12.6px;line-height:16px;color:#c5c9d2;">exemplo-js</a>
<a class="t lnk" style="left:248.55px;top:363.00px;font-size:12.6px;line-height:16px;color:#c5c9d2;letter-spacing:0.069px;">linux-teste</a>
<span class="t" style="left:405.77px;top:363.00px;font-size:12.6px;line-height:16px;color:#c5c9d2;letter-spacing:-0.220px;">2025-09-08 19:09:26</span>
</section>
<section class="card tbl" style="left:691.00px;top:547.00px;width:554px;height:386px">
<div class="thead" style="left:0.00px;top:0.00px;width:554px;height:62px"></div>
<div class="abs" style="left:0.00px;top:29.00px;width:554px;height:1px;background:#374151"></div>
<div class="abs" style="left:0.00px;top:62.00px;width:554px;height:1px;background:#374151"></div>
<span class="t" style="left:190.20px;top:8.00px;font-size:10.5px;line-height:14px;color:#e4e6eb;font-weight:700;letter-spacing:-0.298px;">ÚLTIMAS EXECUÇÕES COM</span>
<div class="badge" style="left:330.20px;top:7.00px;width:33.5px;background:#7f1d1d"></div>
<span class="t" style="left:333.60px;top:9.00px;font-size:10.2px;line-height:13px;color:#fca5a5;letter-spacing:-1.012px;">ERRO</span>
<span class="t" style="left:82.08px;top:39.00px;font-size:12.8px;line-height:17px;color:#e4e6eb;font-weight:700;letter-spacing:-0.414px;">Bot</span>
<span class="t" style="left:255.70px;top:39.00px;font-size:12.8px;line-height:17px;color:#e4e6eb;font-weight:700;letter-spacing:-0.155px;">Agente</span>
<span class="t" style="left:421.27px;top:39.00px;font-size:12.8px;line-height:17px;color:#e4e6eb;font-weight:700;letter-spacing:-0.437px;">Finalizado Em</span>
<a class="t lnk" style="left:43.33px;top:73.00px;font-size:12.6px;line-height:16px;color:#c5c9d2;letter-spacing:0.141px;">exemplo-py-error</a>
<a class="t lnk" style="left:247.95px;top:73.00px;font-size:12.6px;line-height:16px;color:#c5c9d2;letter-spacing:0.069px;">linux-teste</a>
<span class="t" style="left:405.17px;top:73.00px;font-size:12.6px;line-height:16px;color:#c5c9d2;letter-spacing:-0.220px;">2025-09-08 19:00:34</span>
<a class="t lnk" style="left:43.33px;top:105.00px;font-size:12.6px;line-height:16px;color:#c5c9d2;letter-spacing:0.141px;">exemplo-py-error</a>
<a class="t lnk" style="left:247.95px;top:105.00px;font-size:12.6px;line-height:16px;color:#c5c9d2;letter-spacing:0.069px;">linux-teste</a>
<span class="t" style="left:405.17px;top:105.00px;font-size:12.6px;line-height:16px;color:#c5c9d2;letter-spacing:-0.220px;">2025-09-08 18:01:01</span>
<a class="t lnk" style="left:43.33px;top:137.00px;font-size:12.6px;line-height:16px;color:#c5c9d2;letter-spacing:0.141px;">exemplo-py-error</a>
<a class="t lnk" style="left:247.95px;top:137.00px;font-size:12.6px;line-height:16px;color:#c5c9d2;letter-spacing:0.069px;">linux-teste</a>
<span class="t" style="left:405.17px;top:137.00px;font-size:12.6px;line-height:16px;color:#c5c9d2;letter-spacing:-0.220px;">2025-09-08 17:00:50</span>
<a class="t lnk" style="left:43.33px;top:170.00px;font-size:12.6px;line-height:16px;color:#c5c9d2;letter-spacing:0.141px;">exemplo-py-error</a>
<a class="t lnk" style="left:247.95px;top:170.00px;font-size:12.6px;line-height:16px;color:#c5c9d2;letter-spacing:0.069px;">linux-teste</a>
<span class="t" style="left:405.17px;top:170.00px;font-size:12.6px;line-height:16px;color:#c5c9d2;letter-spacing:-0.220px;">2025-09-08 16:00:56</span>
<a class="t lnk" style="left:43.33px;top:202.00px;font-size:12.6px;line-height:16px;color:#c5c9d2;letter-spacing:0.141px;">exemplo-py-error</a>
<a class="t lnk" style="left:247.95px;top:202.00px;font-size:12.6px;line-height:16px;color:#c5c9d2;letter-spacing:0.069px;">linux-teste</a>
<span class="t" style="left:405.17px;top:202.00px;font-size:12.6px;line-height:16px;color:#c5c9d2;letter-spacing:-0.220px;">2025-09-08 15:01:03</span>
<a class="t lnk" style="left:43.33px;top:234.00px;font-size:12.6px;line-height:16px;color:#c5c9d2;letter-spacing:0.141px;">exemplo-py-error</a>
<a class="t lnk" style="left:247.95px;top:234.00px;font-size:12.6px;line-height:16px;color:#c5c9d2;letter-spacing:0.069px;">linux-teste</a>
<span class="t" style="left:405.17px;top:234.00px;font-size:12.6px;line-height:16px;color:#c5c9d2;letter-spacing:-0.220px;">2025-09-08 14:00:50</span>
<a class="t lnk" style="left:43.33px;top:266.00px;font-size:12.6px;line-height:16px;color:#c5c9d2;letter-spacing:0.141px;">exemplo-py-error</a>
<a class="t lnk" style="left:247.95px;top:266.00px;font-size:12.6px;line-height:16px;color:#c5c9d2;letter-spacing:0.069px;">linux-teste</a>
<span class="t" style="left:405.17px;top:266.00px;font-size:12.6px;line-height:16px;color:#c5c9d2;letter-spacing:-0.220px;">2025-09-08 13:00:56</span>
<a class="t lnk" style="left:43.33px;top:299.00px;font-size:12.6px;line-height:16px;color:#c5c9d2;letter-spacing:0.141px;">exemplo-py-error</a>
<a class="t lnk" style="left:247.95px;top:299.00px;font-size:12.6px;line-height:16px;color:#c5c9d2;letter-spacing:0.069px;">linux-teste</a>
<span class="t" style="left:405.17px;top:299.00px;font-size:12.6px;line-height:16px;color:#c5c9d2;letter-spacing:-0.220px;">2025-09-08 12:01:04</span>
<a class="t lnk" style="left:43.33px;top:331.00px;font-size:12.6px;line-height:16px;color:#c5c9d2;letter-spacing:0.141px;">exemplo-py-error</a>
<a class="t lnk" style="left:247.95px;top:331.00px;font-size:12.6px;line-height:16px;color:#c5c9d2;letter-spacing:0.069px;">linux-teste</a>
<span class="t" style="left:405.17px;top:331.00px;font-size:12.6px;line-height:16px;color:#c5c9d2;letter-spacing:-0.168px;">2025-09-08 11:00:42</span>
<a class="t lnk" style="left:43.33px;top:363.00px;font-size:12.6px;line-height:16px;color:#c5c9d2;letter-spacing:0.141px;">exemplo-py-error</a>
<a class="t lnk" style="left:247.95px;top:363.00px;font-size:12.6px;line-height:16px;color:#c5c9d2;letter-spacing:0.069px;">linux-teste</a>
<span class="t" style="left:405.17px;top:363.00px;font-size:12.6px;line-height:16px;color:#c5c9d2;letter-spacing:-0.220px;">2025-09-08 10:00:55</span>
</section>
<section class="card tbl" style="left:1273.00px;top:547.00px;width:554px;height:386px">
<div class="thead" style="left:0.00px;top:0.00px;width:554px;height:62px"></div>
<div class="abs" style="left:0.00px;top:29.00px;width:554px;height:1px;background:#374151"></div>
<div class="abs" style="left:0.00px;top:62.00px;width:554px;height:1px;background:#374151"></div>
<span class="t" style="left:222.20px;top:8.00px;font-size:10.5px;line-height:14px;color:#e4e6eb;font-weight:700;letter-spacing:-0.407px;">BOTS EM</span>
<div class="badge" style="left:271.10px;top:7.00px;width:60.7px;background:#1e3a8a"></div>
<span class="t" style="left:275.00px;top:9.00px;font-size:10.2px;line-height:13px;color:#93c5fd;letter-spacing:-0.570px;">EXECUÇÃO</span>
<span class="t" style="left:82.68px;top:39.00px;font-size:12.8px;line-height:17px;color:#e4e6eb;font-weight:700;letter-spacing:-0.414px;">Bot</span>
<span class="t" style="left:256.30px;top:39.00px;font-size:12.8px;line-height:17px;color:#e4e6eb;font-weight:700;letter-spacing:-0.155px;">Agente</span>
<span class="t" style="left:427.92px;top:39.00px;font-size:12.8px;line-height:17px;color:#e4e6eb;font-weight:700;letter-spacing:-0.313px;">Iniciado Em</span>
</section>
<div class="frame-t"></div><div class="frame-l"></div>
</body></html>
